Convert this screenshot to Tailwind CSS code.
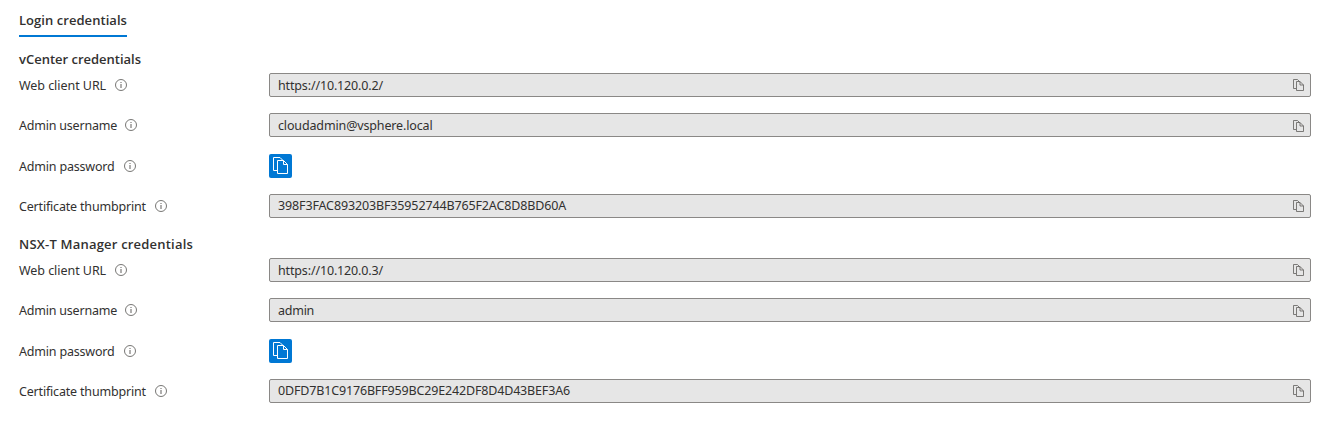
<!DOCTYPE html>
<html lang="en">
<head>
<meta charset="utf-8">
<title>Login credentials</title>
<script src="https://cdn.jsdelivr.net/npm/@tailwindcss/browser@4"></script>
</head>
<body class="bg-white font-['Noto_Sans','Open_Sans',sans-serif] text-[12.5px] leading-6 text-[#323130]">
<svg class="hidden">
  <symbol id="info" viewBox="0 0 12 12"><circle cx="6" cy="6" r="5.5" fill="none" stroke="#605e5c" stroke-width=".85"/><path d="M6 5v4M6 3v1" stroke="#605e5c" stroke-width="1"/></symbol>
  <symbol id="copy" viewBox="0 0 11 12"><path d="M3 9.5H.5V.5H4.5L6.5 2.5M7 2.5H3.5v9h7V6ZM7 2.5V6h3.5" fill="none" stroke="#605e5c" stroke-width=".8"/></symbol>
  <symbol id="copy-lg" viewBox="0 0 15 17"><path d="M4 13.5H.5V.5H7L9.5 3M10.5 3.5h-6v13h10V7.5ZM10.5 3.5v4h4" fill="none" stroke="#fff" stroke-width="1"/></symbol>
</svg>
<main class="flex h-[434px] flex-col pl-[19px] pr-[9px] pt-2">
  <div class="h-[29px] w-[108px] border-b-2 border-[#0078d4] font-['Open_Sans'] text-[13px] font-semibold tracking-[0.05px] whitespace-nowrap">Login credentials</div>

  <section class="pt-[10px]">
    <h2 class="h-[26px] font-['Open_Sans'] text-[13px] font-semibold tracking-[-0.01px]">vCenter credentials</h2>
    <div class="flex flex-col gap-4">
      <div class="flex h-6">
        <div class="flex w-[250px] items-center gap-[9px]"><span class="pt-0.5 tracking-[-0.05px]">Web client URL</span><svg class="size-3"><use href="#info"/></svg></div>
        <div class="flex flex-1 items-center justify-between rounded-[2px] border border-[#8a8886] bg-[#e6e6e6] pl-2 pr-1.5"><span class="pt-0.5 tracking-[-0.15px]">https://10.120.0.2/</span><svg class="h-3 w-[11px]"><use href="#copy"/></svg></div>
      </div>
      <div class="flex h-6">
        <div class="flex w-[250px] items-center gap-2"><span class="pt-0.5 tracking-[-0.21px]">Admin username</span><svg class="size-3"><use href="#info"/></svg></div>
        <div class="flex flex-1 items-center justify-between rounded-[2px] border border-[#8a8886] bg-[#e6e6e6] pl-2 pr-1.5"><span class="pt-0.5 tracking-[-0.14px]">cloudadmin@vsphere.local</span><svg class="mt-0.5 h-3 w-[11px]"><use href="#copy"/></svg></div>
      </div>
      <div class="mt-px flex h-6">
        <div class="flex w-[250px] items-center gap-[9px]"><span class="pt-0.5 tracking-[-0.19px]">Admin password</span><svg class="size-3"><use href="#info"/></svg></div>
        <button class="flex h-6 w-[23px] items-start rounded-[2px] bg-[#0078d4] pl-1 pt-[3px]" aria-label="Copy password"><svg class="h-[17px] w-[15px]"><use href="#copy-lg"/></svg></button>
      </div>
      <div class="flex h-6">
        <div class="flex w-[250px] items-center gap-[9px]"><span class="pt-0.5 tracking-[-0.18px]">Certificate thumbprint</span><svg class="size-3"><use href="#info"/></svg></div>
        <div class="flex flex-1 items-center justify-between rounded-[2px] border border-[#8a8886] bg-[#e6e6e6] pl-2 pr-1.5"><span class="tracking-[-0.135px]">398F3FAC893203BF35952744B765F2AC8D8BD60A</span><svg class="h-3 w-[11px]"><use href="#copy"/></svg></div>
      </div>
    </div>
  </section>

  <section class="pt-[14px]">
    <h2 class="h-[26px] font-['Open_Sans'] text-[13px] font-semibold tracking-[0.2px]">NSX-T Manager credentials</h2>
    <div class="flex flex-col gap-4">
      <div class="flex h-6">
        <div class="flex w-[250px] items-center gap-[9px]"><span class="pt-0.5 tracking-[-0.05px]">Web client URL</span><svg class="size-3"><use href="#info"/></svg></div>
        <div class="flex flex-1 items-center justify-between rounded-[2px] border border-[#8a8886] bg-[#e6e6e6] pl-2 pr-1.5"><span class="pt-0.5 tracking-[-0.15px]">https://10.120.0.3/</span><svg class="h-3 w-[11px]"><use href="#copy"/></svg></div>
      </div>
      <div class="flex h-6">
        <div class="flex w-[250px] items-center gap-2"><span class="pt-0.5 tracking-[-0.21px]">Admin username</span><svg class="size-3"><use href="#info"/></svg></div>
        <div class="flex flex-1 items-center justify-between rounded-[2px] border border-[#8a8886] bg-[#e6e6e6] pl-2 pr-1.5"><span class="pt-0.5 tracking-[-0.25px]">admin</span><svg class="mt-0.5 h-3 w-[11px]"><use href="#copy"/></svg></div>
      </div>
      <div class="mt-px flex h-6">
        <div class="flex w-[250px] items-center gap-[9px]"><span class="pt-0.5 tracking-[-0.19px]">Admin password</span><svg class="size-3"><use href="#info"/></svg></div>
        <button class="flex h-6 w-[23px] items-start rounded-[2px] bg-[#0078d4] pl-1 pt-[3px]" aria-label="Copy password"><svg class="h-[17px] w-[15px]"><use href="#copy-lg"/></svg></button>
      </div>
      <div class="flex h-6">
        <div class="flex w-[250px] items-center gap-[9px]"><span class="pt-0.5 tracking-[-0.18px]">Certificate thumbprint</span><svg class="size-3"><use href="#info"/></svg></div>
        <div class="flex flex-1 items-center justify-between rounded-[2px] border border-[#8a8886] bg-[#e6e6e6] pl-2 pr-1.5"><span class="tracking-[-0.16px]">0DFD7B1C9176BFF959BC29E242DF8D4D43BEF3A6</span><svg class="h-3 w-[11px]"><use href="#copy"/></svg></div>
      </div>
    </div>
  </section>
</main>
</body>
</html>
